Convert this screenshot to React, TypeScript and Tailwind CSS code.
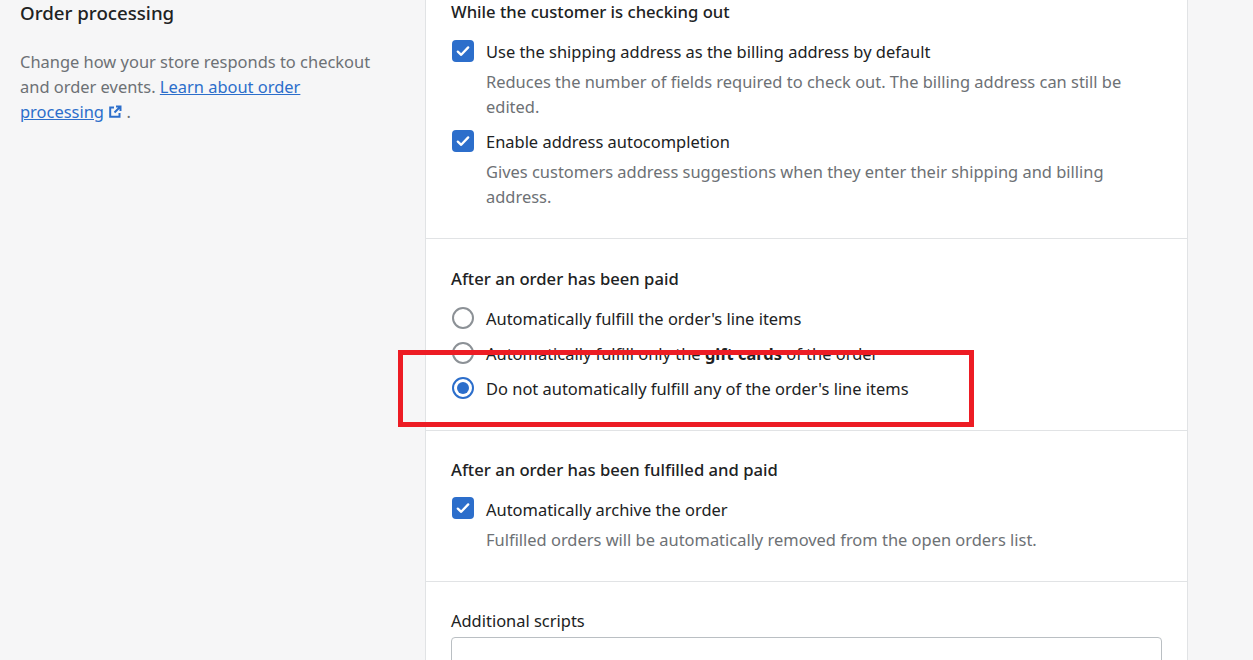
const font = "[font-family:'Noto_Sans','Open_Sans',sans-serif]";

function CheckBox() {
  return (
    <span className="flex h-[22px] w-[22px] shrink-0 items-center justify-center rounded-[4px] bg-[#2c6ecb]">
      <svg width="14" height="14" viewBox="0 0 14 14" fill="none">
        <path d="M1.8 7.6 5.2 10.8 12.2 3.4" stroke="#fff" strokeWidth="2.3" strokeLinecap="round" strokeLinejoin="round" />
      </svg>
    </span>
  );
}

function Radio({ on = false }: { on?: boolean }) {
  return (
    <span className={`flex h-[22px] w-[22px] shrink-0 items-center justify-center rounded-full border-2 bg-white ${on ? "border-[#2c6ecb]" : "border-[#8c9196]"}`}>
      {on && <span className="h-3 w-3 rounded-full bg-[#2c6ecb]" />}
    </span>
  );
}

function Row({ control, children, hint, flush = false }: { control: React.ReactNode; children: React.ReactNode; hint?: React.ReactNode; flush?: boolean }) {
  return (
    <div className="pl-px">
      <div className="flex items-start gap-[12px]">
        {control}
        <span className={flush ? "text-[#202223]" : "-mt-px text-[#202223]"}>{children}</span>
      </div>
      {hint && <p className="mt-[5px] pl-[34px] text-[#6d7175]">{hint}</p>}
    </div>
  );
}

export default function App() {
  return (
    <div className={`relative flex h-[660px] w-full overflow-hidden bg-[#f6f6f7] text-[16.45px] leading-[25px] ${font}`}>
      <aside className="w-[425px] shrink-0 pl-[20px] pr-[40px]">
        <h2 className="text-[18.7px] font-medium text-[#202223]">Order processing</h2>
        <p className="mt-[24px] text-[#6d7175]">
          Change how your store responds to checkout and order events.{" "}
          <a className="text-[#2c6ecb] underline">Learn about order processing</a>{" "}
          <svg className="inline-block align-[-1px] text-[#2c6ecb]" width="14" height="14" viewBox="0 0 14 14" fill="none">
            <path d="M6 2.5H2.2V11.8H11.5V8M8 1.5H12.5V6M12.2 1.8 6.5 7.5" stroke="currentColor" strokeWidth="2" />
          </svg>{" "}
          .
        </p>
      </aside>
      <main className="h-full w-[763px] shrink-0 border-x border-[#e1e3e5] bg-white">
        <section className="border-b border-[#e1e3e5] px-[25px] pb-[29px]">
          <h3 className="-mt-px text-[16.65px] font-medium text-[#202223]">While the customer is checking out</h3>
          <div className="mt-[16px] flex flex-col gap-[11px]">
            <Row control={<CheckBox />} hint="Reduces the number of fields required to check out. The billing address can still be edited.">
              Use the shipping address as the billing address by default
            </Row>
            <Row control={<CheckBox />} hint="Gives customers address suggestions when they enter their shipping and billing address.">
              Enable address autocompletion
            </Row>
          </div>
        </section>
        <section className="border-b border-[#e1e3e5] px-[25px] pb-[29px] pt-[28px]">
          <h3 className="-mt-px text-[16.65px] font-medium text-[#202223]">After an order has been paid</h3>
          <div className="mt-[16px] flex flex-col gap-[11px]">
            <Row control={<Radio />}>Automatically fulfill the order's line items</Row>
            <Row control={<Radio />}>
              Automatically fulfill only the <b className="font-bold">gift cards</b> of the order
            </Row>
            <Row control={<Radio on />}>Do not automatically fulfill any of the order's line items</Row>
          </div>
        </section>
        <section className="border-b border-[#e1e3e5] px-[25px] pb-[29px] pt-[27px]">
          <h3 className="-mt-px text-[16.65px] font-medium text-[#202223]">After an order has been fulfilled and paid</h3>
          <div className="mt-[15px]">
            <Row flush control={<CheckBox />} hint="Fulfilled orders will be automatically removed from the open orders list.">
              Automatically archive the order
            </Row>
          </div>
        </section>
        <section className="px-[25px] pt-[26px]">
          <label className="block text-[#202223]">Additional scripts</label>
          <div className="mt-[4px] h-[120px] rounded-[4px] border border-[#babfc3] bg-white" />
        </section>
      </main>
      <div className="absolute left-[398px] top-[350px] h-[77px] w-[576px] border-[5px] border-[#ed1c24]" />
    </div>
  );
}
